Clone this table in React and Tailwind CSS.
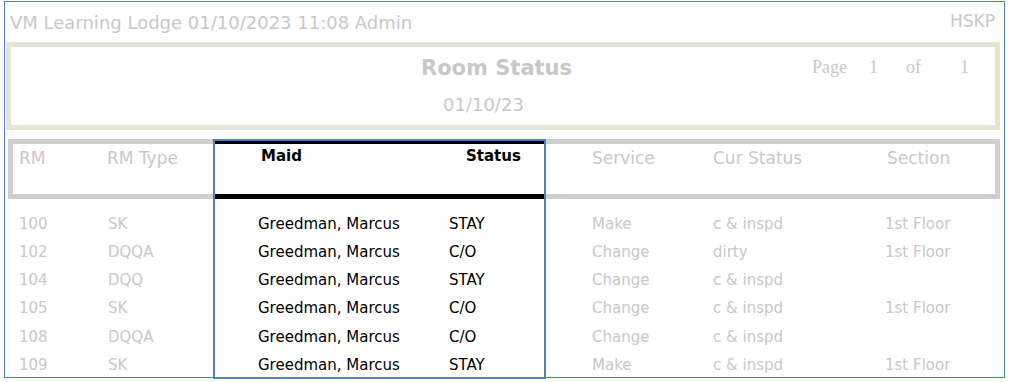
const rows = [
  { rm: '100', type: 'SK', maid: 'Greedman, Marcus', status: 'STAY', service: 'Make', cur: 'c & inspd', section: '1st Floor' },
  { rm: '102', type: 'DQQA', maid: 'Greedman, Marcus', status: 'C/O', service: 'Change', cur: 'dirty', section: '1st Floor' },
  { rm: '104', type: 'DQQ', maid: 'Greedman, Marcus', status: 'STAY', service: 'Change', cur: 'c & inspd', section: '' },
  { rm: '105', type: 'SK', maid: 'Greedman, Marcus', status: 'C/O', service: 'Change', cur: 'c & inspd', section: '1st Floor' },
  { rm: '108', type: 'DQQA', maid: 'Greedman, Marcus', status: 'C/O', service: 'Change', cur: 'c & inspd', section: '' },
  { rm: '109', type: 'SK', maid: 'Greedman, Marcus', status: 'STAY', service: 'Make', cur: 'c & inspd', section: '1st Floor' },
];

export default function App() {
  return (
    <div className="bg-white w-[1010px] h-[382px] overflow-hidden font-['DejaVu_Sans',sans-serif]">
      <div className="ml-[4px] mt-[1px] w-[1001px] h-[377px] border border-[#4f81bd]">
        {/* top line */}
        <div className="h-[40px] flex items-center justify-between pl-[5px] pr-[9px] text-[18px] text-[#c8c8c8]">
          <span>VM Learning Lodge 01/10/2023 11:08 Admin</span>
          <span className="text-[17px]">HSKP</span>
        </div>

        {/* report title */}
        <div className="ml-[1px] w-[994px] h-[88px] border-[5px] border-[#e6e4d2] flex items-start">
          <div className="ml-[410px] w-[150px] pt-[8px] flex flex-col items-start">
            <div className="text-[21px] leading-[26px] font-bold text-[#c8c8c8] whitespace-nowrap">Room Status</div>
            <div className="mt-[13px] pl-[22px] text-[18px] leading-[22px] text-[#c8c8c8]">01/10/23</div>
          </div>
          <div className="ml-[241px] mt-[9px] flex text-[18px] leading-[22px] text-[#c8c8c8] font-['Liberation_Serif',serif]">
            <span className="w-[57px]">Page</span>
            <span className="w-[37px]">1</span>
            <span className="w-[54px]">of</span>
            <span>1</span>
          </div>
        </div>

        {/* table */}
        <div className="mt-[9px] flex items-start">
          {/* room columns */}
          <div className="w-[208px]">
            <div className="ml-[3px] h-[60px] border-l-[5px] border-y-[5px] border-[#cfcfcf] flex items-start pt-[4px] pl-[6px] text-[17px] leading-[20px] text-[#c8c8c8]">
              <span className="w-[88px]">RM</span>
              <span>RM Type</span>
            </div>
            <div className="mt-[11px] pl-[14px] text-[15px] text-[#c8c8c8]">
              {rows.map((r) => (
                <div key={r.rm} className="h-[28.2px] flex items-center">
                  <span className="w-[89px]">{r.rm}</span>
                  <span>{r.type}</span>
                </div>
              ))}
            </div>
          </div>

          {/* highlighted maid / status block */}
          <div className="w-[333px] h-[240px] border-2 border-[#4f81bd]">
            <div className="h-[58px] border-t-[3px] border-b-[5px] border-black flex items-start pt-[3px] pl-[46px] text-[15px] leading-[18px] font-bold text-black">
              <span className="w-[205px]">Maid</span>
              <span>Status</span>
            </div>
            <div className="mt-[11px] pl-[43px] text-[15px] text-black">
              {rows.map((r) => (
                <div key={r.rm} className="h-[28.2px] flex items-center">
                  <span className="w-[191px]">{r.maid}</span>
                  <span>{r.status}</span>
                </div>
              ))}
            </div>
          </div>

          {/* service columns */}
          <div className="w-[454px]">
            <div className="h-[60px] border-r-[5px] border-y-[5px] border-[#cfcfcf] flex items-start pt-[4px] pl-[46px] text-[17px] leading-[20px] text-[#c8c8c8]">
              <span className="w-[121px]">Service</span>
              <span className="w-[174px]">Cur Status</span>
              <span>Section</span>
            </div>
            <div className="mt-[11px] pl-[46px] text-[15px] text-[#c8c8c8]">
              {rows.map((r) => (
                <div key={r.rm} className="h-[28.2px] flex items-center">
                  <span className="w-[121px]">{r.service}</span>
                  <span className="w-[172px]">{r.cur}</span>
                  <span>{r.section}</span>
                </div>
              ))}
            </div>
          </div>
        </div>
      </div>
    </div>
  );
}
